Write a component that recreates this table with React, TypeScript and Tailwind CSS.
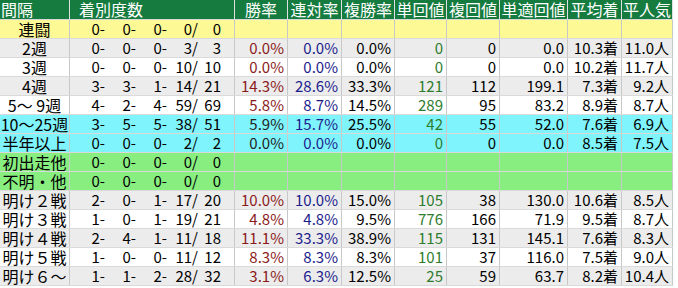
import React from 'react';

type Row = {
  label: string;
  bg: string;
  counts: number[];
  stats?: string[];
};

const rows: Row[] = [
  { label: '連闘', bg: 'bg-[#fdf994]', counts: [0, 0, 0, 0, 0] },
  { label: '2週', bg: 'bg-[#ececec]', counts: [0, 0, 0, 3, 3], stats: ['0.0%', '0.0%', '0.0%', '0', '0', '0.0', '10.3着', '11.0人'] },
  { label: '3週', bg: 'bg-white', counts: [0, 0, 0, 10, 10], stats: ['0.0%', '0.0%', '0.0%', '0', '0', '0.0', '10.2着', '11.7人'] },
  { label: '4週', bg: 'bg-[#ececec]', counts: [3, 3, 1, 14, 21], stats: ['14.3%', '28.6%', '33.3%', '121', '112', '199.1', '7.3着', '9.2人'] },
  { label: '5～ 9週', bg: 'bg-white', counts: [4, 2, 4, 59, 69], stats: ['5.8%', '8.7%', '14.5%', '289', '95', '83.2', '8.9着', '8.7人'] },
  { label: '10～25週', bg: 'bg-[#80f4fc]', counts: [3, 5, 5, 38, 51], stats: ['5.9%', '15.7%', '25.5%', '42', '55', '52.0', '7.6着', '6.9人'] },
  { label: '半年以上', bg: 'bg-[#80f4fc]', counts: [0, 0, 0, 2, 2], stats: ['0.0%', '0.0%', '0.0%', '0', '0', '0.0', '8.5着', '7.5人'] },
  { label: '初出走他', bg: 'bg-[#88ee80]', counts: [0, 0, 0, 0, 0] },
  { label: '不明・他', bg: 'bg-[#88ee80]', counts: [0, 0, 0, 0, 0] },
  { label: '明け２戦', bg: 'bg-[#ececec]', counts: [2, 0, 1, 17, 20], stats: ['10.0%', '10.0%', '15.0%', '105', '38', '130.0', '10.6着', '8.5人'] },
  { label: '明け３戦', bg: 'bg-white', counts: [1, 0, 1, 19, 21], stats: ['4.8%', '4.8%', '9.5%', '776', '166', '71.9', '9.5着', '8.7人'] },
  { label: '明け４戦', bg: 'bg-[#ececec]', counts: [2, 4, 1, 11, 18], stats: ['11.1%', '33.3%', '38.9%', '115', '131', '145.1', '7.6着', '8.3人'] },
  { label: '明け５戦', bg: 'bg-white', counts: [1, 0, 0, 11, 12], stats: ['8.3%', '8.3%', '8.3%', '101', '37', '116.0', '7.5着', '9.0人'] },
  { label: '明け６～', bg: 'bg-[#ececec]', counts: [1, 1, 2, 28, 32], stats: ['3.1%', '6.3%', '12.5%', '25', '59', '63.7', '8.2着', '10.4人'] },
];

const cols = 'grid grid-cols-[70px_165px_53px_54px_53px_52px_53px_68px_54px_51px]';
const headers = ['勝率', '連対率', '複勝率', '単回値', '複回値', '単適回値', '平均着', '平人気'];
const slotWidths = ['w-[35px]', 'w-[31px]', 'w-[31px]', 'w-[31px]', 'w-[23px]'];

export default function App() {
  return (
    <div className="w-[678px] h-[288px] bg-white font-['Noto_Sans_CJK_JP',sans-serif] text-[16px] text-black">
      <div className="w-[673px]">
        {/* header */}
        <div className={`${cols} h-[20px] bg-[#157b3e] text-white border-b border-[#d8d8d8] leading-[17px]`}>
          <div className="border-r border-[#e0e0e0] pl-[1px] flex items-center">間隔</div>
          <div className="border-r border-[#e0e0e0] pl-[9px] flex items-center">着別度数</div>
          {headers.map((h) => (
            <div key={h} className="border-r border-[#e0e0e0] flex items-center justify-center whitespace-nowrap">
              {h}
            </div>
          ))}
        </div>

        {rows.map((row, i) => {
          const cyan = row.bg === 'bg-[#80f4fc]';
          const s = row.stats;
          const colors = [
            cyan ? 'text-[#222]' : 'text-[#8b1a1a]',
            'text-[#1c1c8c]',
            'text-black',
            'text-[#2e7d2e]',
            'text-black',
            'text-black',
            'text-black',
            'text-black',
          ];
          return (
            <div key={i} className={`${cols} h-[19px] ${row.bg} border-b border-[#dadada] leading-[16px]`}>
              <div className="border-r border-[#c8c8c8] flex items-center justify-center whitespace-nowrap">
                {row.label}
              </div>
              <div className="border-r border-[#c8c8c8] flex items-center pr-[13px] text-[15px]">
                {row.counts.map((c, j) => (
                  <span key={j} className={`${slotWidths[j]} text-right`}>
                    {c}
                    {j < 3 ? '-' : j === 3 ? '/' : ''}
                  </span>
                ))}
              </div>
              {colors.map((color, j) => (
                <div
                  key={j}
                  className={`border-r border-[#c8c8c8] flex items-center justify-end pr-[3px] text-[15px] whitespace-nowrap ${color}`}
                >
                  {s ? s[j] : ''}
                </div>
              ))}
            </div>
          );
        })}
      </div>
    </div>
  );
}
